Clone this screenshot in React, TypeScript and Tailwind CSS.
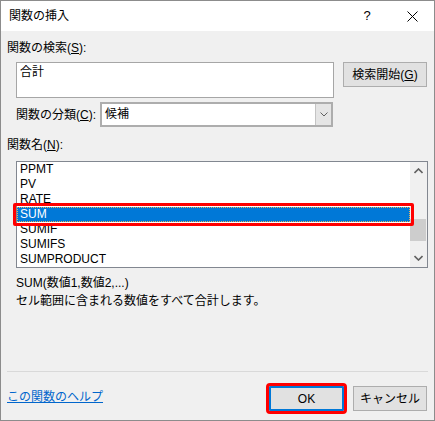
const font = "font-['Liberation_Sans','Noto_Sans_CJK_JP',sans-serif]";

const functionNames = ["PPMT", "PV", "RATE", "SUM", "SUMIF", "SUMIFS", "SUMPRODUCT"];

function Chevron({ dir, className }: { dir: "up" | "down"; className?: string }) {
  return (
    <svg width="9" height="6" viewBox="0 0 9 6" className={className}>
      {dir === "up" ? (
        <polyline points="0.5,5 4.5,1 8.5,5" fill="none" stroke="#606060" strokeWidth="1.6" />
      ) : (
        <polyline points="0.5,1 4.5,5 8.5,1" fill="none" stroke="#606060" strokeWidth="1.6" />
      )}
    </svg>
  );
}

export default function App() {
  return (
    <div className={`w-[435px] h-[421px] border border-[#8c8c8c] bg-[#f0f0f0] flex flex-col text-[12px] text-black ${font}`}>
      {/* title bar */}
      <div className="h-[30px] bg-white flex items-center shrink-0">
        <span className="pl-[8px] flex-1 leading-[16px]">関数の挿入</span>
        <span className="w-[46px] text-center text-[13px]">?</span>
        <span className="w-[44px] flex justify-center">
          <svg width="11" height="11" viewBox="0 0 11 11">
            <path d="M0.5 0.5 L10.5 10.5 M10.5 0.5 L0.5 10.5" stroke="#000" strokeWidth="1" />
          </svg>
        </span>
      </div>

      <div className="flex-1 px-[6px] pt-[9px] flex flex-col">
        <div className="leading-[16px] h-[16px]">
          関数の検索(<span className="underline">S</span>):
        </div>

        <div className="ml-[9px] mt-[6px] flex gap-[9px]">
          <div className="w-[318px] h-[36px] bg-white border border-[#a6a6a6] pl-[3px] pt-[1px] leading-[16px]">
            合計
          </div>
          <button className="w-[84px] h-[25px] bg-[#e1e1e1] border border-[#adadad] leading-[16px]">
            検索開始(<span className="underline">G</span>)
          </button>
        </div>

        <div className="ml-[9px] mt-[4px] flex items-center">
          <span className="w-[84px] leading-[16px]">
            関数の分類(<span className="underline">C</span>):
          </span>
          <div className="w-[233px] h-[25px] bg-white border-2 border-[#adadad] flex">
            <span className="flex-1 pl-[3px] leading-[21px]">候補</span>
            <span className="w-[16px] bg-[#e5e5e5] border-l border-[#c4c4c4] flex items-center justify-center">
              <svg width="8" height="5" viewBox="0 0 8 5">
                <polyline points="0.5,0.5 4,4 7.5,0.5" fill="none" stroke="#606060" strokeWidth="1" />
              </svg>
            </span>
          </div>
        </div>

        <div className="mt-[10px] leading-[16px] h-[16px]">
          関数名(<span className="underline">N</span>):
        </div>

        <div className="relative ml-[9px] mt-[8px] w-[412px] h-[107px] bg-white border border-[#828790] flex">
          <ul className="flex-1 pt-0">
            {functionNames.map((name) =>
              name === "SUM" ? (
                <li
                  key={name}
                  className="h-[15px] leading-[13px] bg-[#0078d7] text-white pl-[2px] border border-dotted border-[#e8b05a]"
                >
                  {name}
                </li>
              ) : (
                <li key={name} className="h-[15px] leading-[15px] pl-[3px]">
                  {name}
                </li>
              ),
            )}
          </ul>
          <div className="w-[17px] bg-[#f0f0f0] flex flex-col">
            <div className="h-[17px] flex items-center justify-center">
              <Chevron dir="up" />
            </div>
            <div className="h-[40px]" />
            <div className="h-[22px] w-[16px] bg-[#cdcdcd]" />
            <div className="flex-1 flex items-end justify-center pb-[6px]">
              <Chevron dir="down" />
            </div>
          </div>
          {/* annotation around the selected row */}
          <div className="absolute left-[-4px] top-[41px] w-[401px] h-[23px] border-[3px] border-[#ff0000] rounded-[2px]" />
        </div>

        <div className="ml-[9px] mt-[6px] leading-[18px]">
          <div>SUM(数値1,数値2,...)</div>
          <div>セル範囲に含まれる数値をすべて合計します。</div>
        </div>

        <div className="mt-[61px] h-px bg-[#d9d9d9]" />

        <div className="mt-[14px] flex items-center">
          <a className="flex-1 text-[#0066cc] underline leading-[16px] -mt-[4px]">この関数のヘルプ</a>
          <div className="flex gap-[9px] pr-[1px]">
            <button className="w-[75px] h-[25px] bg-[#e1e1e1] border-2 border-[#0078d7] outline-3 outline-solid outline-[#ff0000] rounded-[1px]">
              OK
            </button>
            <button className="w-[74px] h-[25px] bg-[#e1e1e1] border border-[#adadad]">キャンセル</button>
          </div>
        </div>
      </div>
    </div>
  );
}
